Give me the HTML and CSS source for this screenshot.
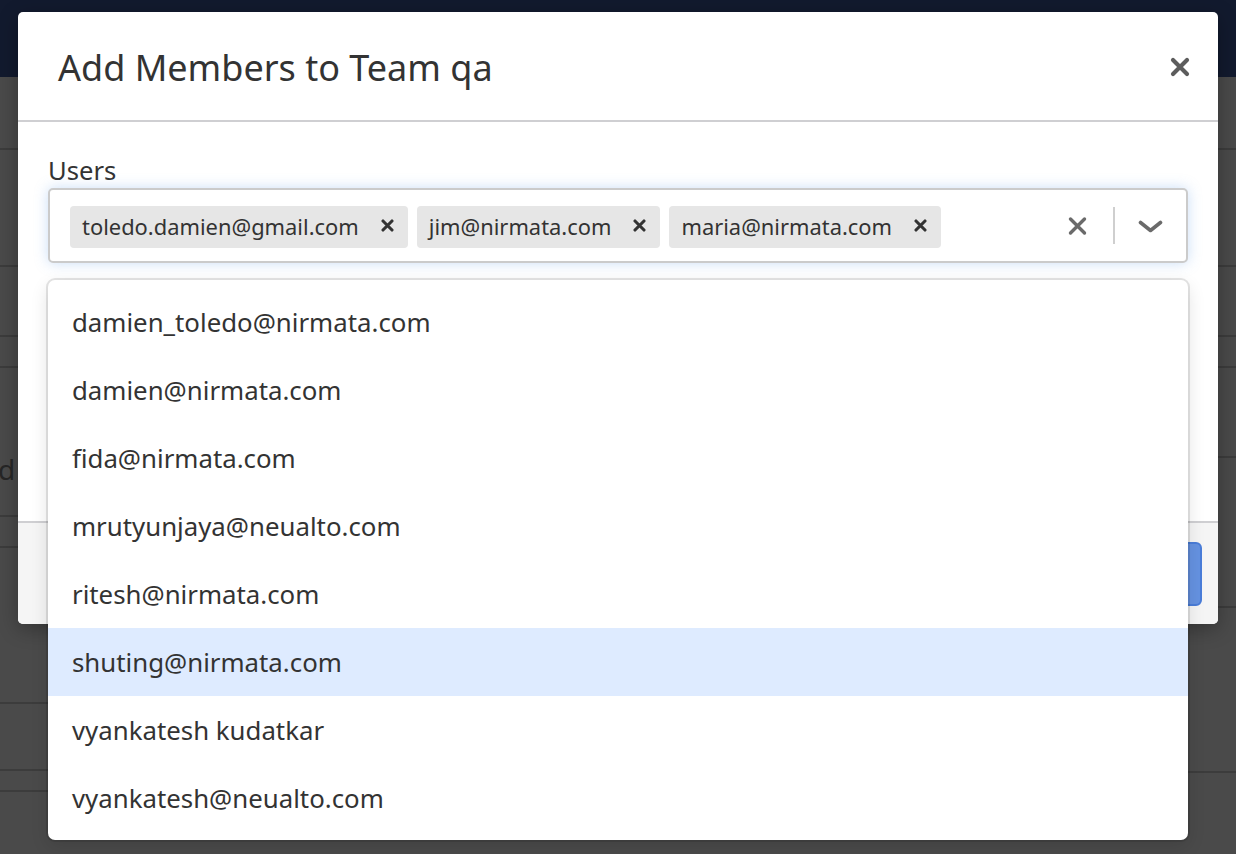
FILE: index.html
```html
<!DOCTYPE html>
<html lang="en">
<head>
<meta charset="utf-8">
<title>Add Members to Team qa</title>
<link rel="stylesheet" href="styles.css">
</head>
<body>
<div class="navbar"></div>
<div class="page">
  <div class="col col-left">
    <div class="row" style="height:73px"></div>
    <div class="row" style="height:117px"></div>
    <div class="row" style="height:70px"></div>
    <div class="row" style="height:31px"></div>
    <div class="row row-text" style="height:149px"><span class="bg-text">d</span></div>
    <div class="row" style="height:31px"></div>
    <div class="row" style="height:156px"></div>
    <div class="row" style="height:67px"></div>
    <div class="row" style="height:21px"></div>
  </div>
  <div class="col col-right">
    <div class="row" style="height:73px"></div>
    <div class="row" style="height:117px"></div>
    <div class="row" style="height:70px"></div>
    <div class="row" style="height:31px"></div>
    <div class="row" style="height:90px"></div>
    <div class="row" style="height:150px"></div>
    <div class="row" style="height:165px"></div>
  </div>
</div>

<div class="modal">
  <div class="modal-header">
    <h4 class="modal-title">Add Members to Team qa</h4>
    <button class="close" type="button" aria-label="Close">
      <svg width="20" height="20" viewBox="0 0 20 20"><path d="M3 3 L17 17 M17 3 L3 17" stroke="#5c5c5c" stroke-width="4.2" stroke-linecap="round" fill="none"/></svg>
    </button>
  </div>
  <div class="modal-body">
    <label class="field-label">Users</label>
    <div class="select">
      <div class="control">
        <div class="values">
          <div class="chip"><span class="chip-label">toledo.damien@gmail.com</span><span class="chip-remove"><svg width="13" height="13" viewBox="0 0 13 13"><path d="M2 2 L11 11 M11 2 L2 11" stroke="#333" stroke-width="3.1" stroke-linecap="round" fill="none"/></svg></span></div>
          <div class="chip"><span class="chip-label">jim@nirmata.com</span><span class="chip-remove"><svg width="13" height="13" viewBox="0 0 13 13"><path d="M2 2 L11 11 M11 2 L2 11" stroke="#333" stroke-width="3.1" stroke-linecap="round" fill="none"/></svg></span></div>
          <div class="chip"><span class="chip-label">maria@nirmata.com</span><span class="chip-remove"><svg width="13" height="13" viewBox="0 0 13 13"><path d="M2 2 L11 11 M11 2 L2 11" stroke="#333" stroke-width="3.1" stroke-linecap="round" fill="none"/></svg></span></div>
        </div>
        <div class="indicators">
          <span class="clear-ind"><svg width="19" height="20" viewBox="0 0 19 20"><path d="M2.5 3 L16.5 17 M16.5 3 L2.5 17" stroke="#6a6a6a" stroke-width="3.4" stroke-linecap="round" fill="none"/></svg></span>
          <span class="sep"></span>
          <span class="drop-ind"><svg width="25" height="13" viewBox="0 0 25 13"><path d="M2.5 2.5 L12.5 10.5 L22.5 2.5" stroke="#6a6a6a" stroke-width="3.6" stroke-linecap="round" stroke-linejoin="round" fill="none"/></svg></span>
        </div>
      </div>
      <div class="menu">
        <div class="option">damien_toledo@nirmata.com</div>
        <div class="option">damien@nirmata.com</div>
        <div class="option">fida@nirmata.com</div>
        <div class="option">mrutyunjaya@neualto.com</div>
        <div class="option">ritesh@nirmata.com</div>
        <div class="option option-focused">shuting@nirmata.com</div>
        <div class="option">vyankatesh kudatkar</div>
        <div class="option">vyankatesh@neualto.com</div>
      </div>
    </div>
  </div>
  <div class="modal-footer">
    <button class="btn-primary" type="button">Add</button>
  </div>
</div>
</body>
</html>
```

FILE: styles.css
```css
* { box-sizing: border-box; }

html, body {
  margin: 0;
  padding: 0;
}

body {
  width: 1236px;
  height: 854px;
  overflow: hidden;
  background: #4a4a4a;
  font-family: "Noto Sans", "Open Sans", sans-serif;
  color: #333;
  position: relative;
}

.navbar {
  height: 77px;
  background: #121a2e;
}

.page {
  display: flex;
}

.col {
  display: flex;
  flex-direction: column;
}

.col-left { width: 845px; border-right: 2px solid #3d3d3d; }
.col-right { flex: 1; }

.row {
  border-bottom: 2px solid #3c3c3c;
  flex: none;
}

.row-text {
  display: flex;
  align-items: center;
  padding-top: 54px;
}

.bg-text {
  font-size: 28px;
  color: #262626;
  margin-left: -2px;
}

/* modal */
.modal {
  position: absolute;
  top: 12px;
  left: 18px;
  width: 1200px;
  background: #fff;
  border-radius: 5px;
  box-shadow: 0 5px 20px rgba(0, 0, 0, 0.3);
}

.modal-header {
  display: flex;
  align-items: center;
  justify-content: space-between;
  padding: 32px 28px 28px 40px;
  border-bottom: 2px solid #cfcfd2;
}

.modal-title {
  margin: 0;
  font-size: 36px;
  line-height: 48px;
  font-weight: 400;
  color: #333;
}

.close {
  border: 0;
  background: none;
  padding: 0;
  width: 20px;
  height: 20px;
  display: flex;
  margin-top: -2px;
}

.modal-body {
  height: 399px;
  padding: 31px 30px 0;
}

.field-label {
  display: block;
  font-size: 25.6px;
  line-height: 35px;
  color: #333;
}

.select {
  position: relative;
}

.control {
  height: 75px;
  border: 2px solid #cbcbcb;
  border-radius: 5px;
  display: flex;
  align-items: center;
  background: #fff;
  box-shadow: 0 0 14px rgba(102, 160, 233, 0.35);
}

.values {
  flex: 1;
  display: flex;
  align-items: center;
  gap: 9px;
  padding-left: 20px;
  padding-top: 2px;
}

.chip {
  height: 42px;
  background: #e6e6e6;
  border-radius: 4px;
  display: flex;
  align-items: center;
}

.chip-label {
  font-size: 21.9px;
  line-height: 30px;
  padding: 0 16px 0 12px;
  color: #333;
  white-space: nowrap;
}

.chip-remove {
  display: flex;
  padding: 0 14px 0 6px;
  margin-top: -2px;
}

.indicators {
  display: flex;
  align-items: center;
  height: 100%;
}

.clear-ind {
  display: flex;
  padding: 0 26px 0 12px;
}

.sep {
  width: 2px;
  height: 37px;
  background: #cfcfcf;
}

.drop-ind {
  display: flex;
  padding: 0 23px;
  margin-top: 2px;
}

.menu {
  position: absolute;
  top: calc(100% + 17px);
  left: 0;
  right: 0;
  background: #fff;
  border-radius: 7px;
  padding: 8px 0;
  box-shadow: 0 0 0 2px rgba(0, 0, 0, 0.1), 0 6px 18px rgba(0, 0, 0, 0.12);
  z-index: 5;
}

.option {
  height: 68px;
  line-height: 68px;
  padding: 0 24px;
  font-size: 25.8px;
  color: #333;
}

.option-focused {
  background: #deebff;
}

.modal-footer {
  height: 103px;
  border-top: 2px solid #cfcfd2;
  background: #f5f5f5;
  border-radius: 0 0 5px 5px;
  display: flex;
  justify-content: flex-end;
  padding: 19px 16px 0;
}

.btn-primary {
  height: 64px;
  width: 130px;
  border: 2px solid #4a7dd9;
  border-radius: 6px;
  background: #6592e1;
  color: #fff;
  font-family: "Noto Sans", sans-serif;
  font-size: 24px;
}
```
